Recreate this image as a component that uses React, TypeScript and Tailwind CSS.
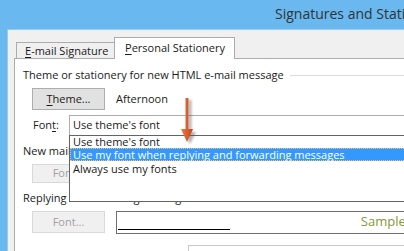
import React from "react";

export default function App() {
  return (
    <div className="relative w-[404px] h-[251px] overflow-hidden bg-[#69b8ef] flex flex-col font-['Open_Sans',sans-serif] text-[11px] text-[#1a1a1a]">
      {/* Title bar */}
      <div className="h-[29px] shrink-0 pl-[275px] pt-[4px] text-[14px] leading-[20px] text-[#333333] whitespace-nowrap">
        Signatures and Stationery
      </div>
      <div className="flex-1 flex min-h-0">
        <div className="w-[7px] shrink-0" />
        <div className="flex-1 min-w-0 bg-[#f0f0f0] border-t border-l border-[#9cc8ea] pl-[6px] flex flex-col">
          {/* Tabs */}
          <div className="h-[28px] shrink-0 flex items-end pl-[2px]">
            <div className="w-[99px] h-[16px] border border-b-0 border-[#acacac] bg-[#f0f0f0] pl-[8px] leading-[15px] whitespace-nowrap">
              <span className="underline underline-offset-2">E</span>-mail Signature
            </div>
            <div className="relative z-10 -ml-px -mb-px w-[121px] h-[22px] border border-b-0 border-[#acacac] bg-white pl-[10px] pt-[2px] leading-[15px] whitespace-nowrap">
              <span className="underline underline-offset-2">P</span>ersonal Stationery
            </div>
          </div>
          {/* Panel */}
          <div className="relative flex-1 min-h-0 bg-white border-l border-t border-[#acacac] pl-[8px] flex flex-col">
            <div className="mt-[8px] h-[16px] flex items-center whitespace-nowrap">
              <span>Theme or stationery for new HTML e-mail message</span>
              <div className="flex-1 ml-[6px] h-px bg-[#dcdcdc]" />
            </div>
            <div className="mt-[5px] flex items-center">
              <div className="ml-[9px] w-[73px] h-[22px] bg-[#e1e1e1] border border-[#adadad] flex items-center justify-center">
                <span>
                  <span className="underline underline-offset-2">T</span>heme...
                </span>
              </div>
              <span className="ml-[11px]">Afternoon</span>
            </div>
            <div className="mt-[5px] h-[20px] flex items-center">
              <div className="ml-[10px] w-[36px]">
                Fon<span className="underline underline-offset-2">t</span>:
              </div>
              <div className="flex-1 h-[21px] border-t border-l border-[#acacac] border-b border-b-[#6e6e6e] pl-[3px] flex items-center whitespace-nowrap">
                Use theme's font
              </div>
            </div>
            <div className="mt-[8px] h-[16px] leading-[16px] whitespace-nowrap">New mail messages</div>
            <div className="mt-[5px] ml-[9px] w-[73px] h-[22px] bg-[#f0f0f0] border border-[#d9d9d9] flex items-center justify-center text-[#a0a0a0]">
              Font...
            </div>
            <div className="mt-[7px] h-[16px] leading-[16px] whitespace-nowrap">Replying or forwarding messages</div>
            <div className="mt-[5px] flex items-center">
              <div className="ml-[9px] w-[73px] h-[22px] shrink-0 bg-[#f0f0f0] border border-[#d9d9d9] flex items-center justify-center text-[#a0a0a0]">
                Font...
              </div>
              <div className="ml-[11px] w-[320px] shrink-0 h-[23px] border border-[#6e6e6e] flex items-center">
                <div className="ml-[1px] mt-[14px] w-[124px] h-px bg-black" />
                <span className="ml-[131px] text-[13px] text-[#7f9a38] whitespace-nowrap">Sample Text</span>
              </div>
            </div>
            <div className="mt-[11px] ml-[165px] w-[300px] h-[10px] border-t border-l border-[#c8c8c8]" />

            {/* Dropdown list */}
            <div className="absolute left-[54px] top-[76px] w-[360px] h-[67px] bg-white border border-[#646464] flex flex-col whitespace-nowrap">
              <div className="h-[12px] leading-[12px] pl-[3px]">Use theme's font</div>
              <div className="h-[13px] leading-[12px] pl-[2px] bg-[#3399ff] text-white border border-dotted border-[#f3c27c]">
                Use my font when replying and forwarding messages
              </div>
              <div className="h-[16px] leading-[16px] pl-[3px]">Always use my fonts</div>
            </div>
          </div>
        </div>
      </div>

      {/* Arrow */}
      <svg className="absolute left-[176px] top-[95px]" width="26" height="52" viewBox="0 0 26 52">
        <defs>
          <linearGradient id="ag" x1="0" y1="0" x2="1" y2="0">
            <stop offset="0" stopColor="#f07a45" />
            <stop offset="1" stopColor="#c2431c" />
          </linearGradient>
          <filter id="blur" x="-50%" y="-50%" width="200%" height="200%">
            <feGaussianBlur stdDeviation="1.2" />
          </filter>
        </defs>
        <path d="M12.5 5 L15.5 5 L15.5 37 L20 37 L14 49 L8 37 L12.5 37 Z" fill="#555" opacity="0.45" filter="url(#blur)" />
        <path d="M9.5 3 L12.5 3 L12.5 34 L17 34 L11 47 L5 34 L9.5 34 Z" fill="url(#ag)" />
      </svg>
    </div>
  );
}
